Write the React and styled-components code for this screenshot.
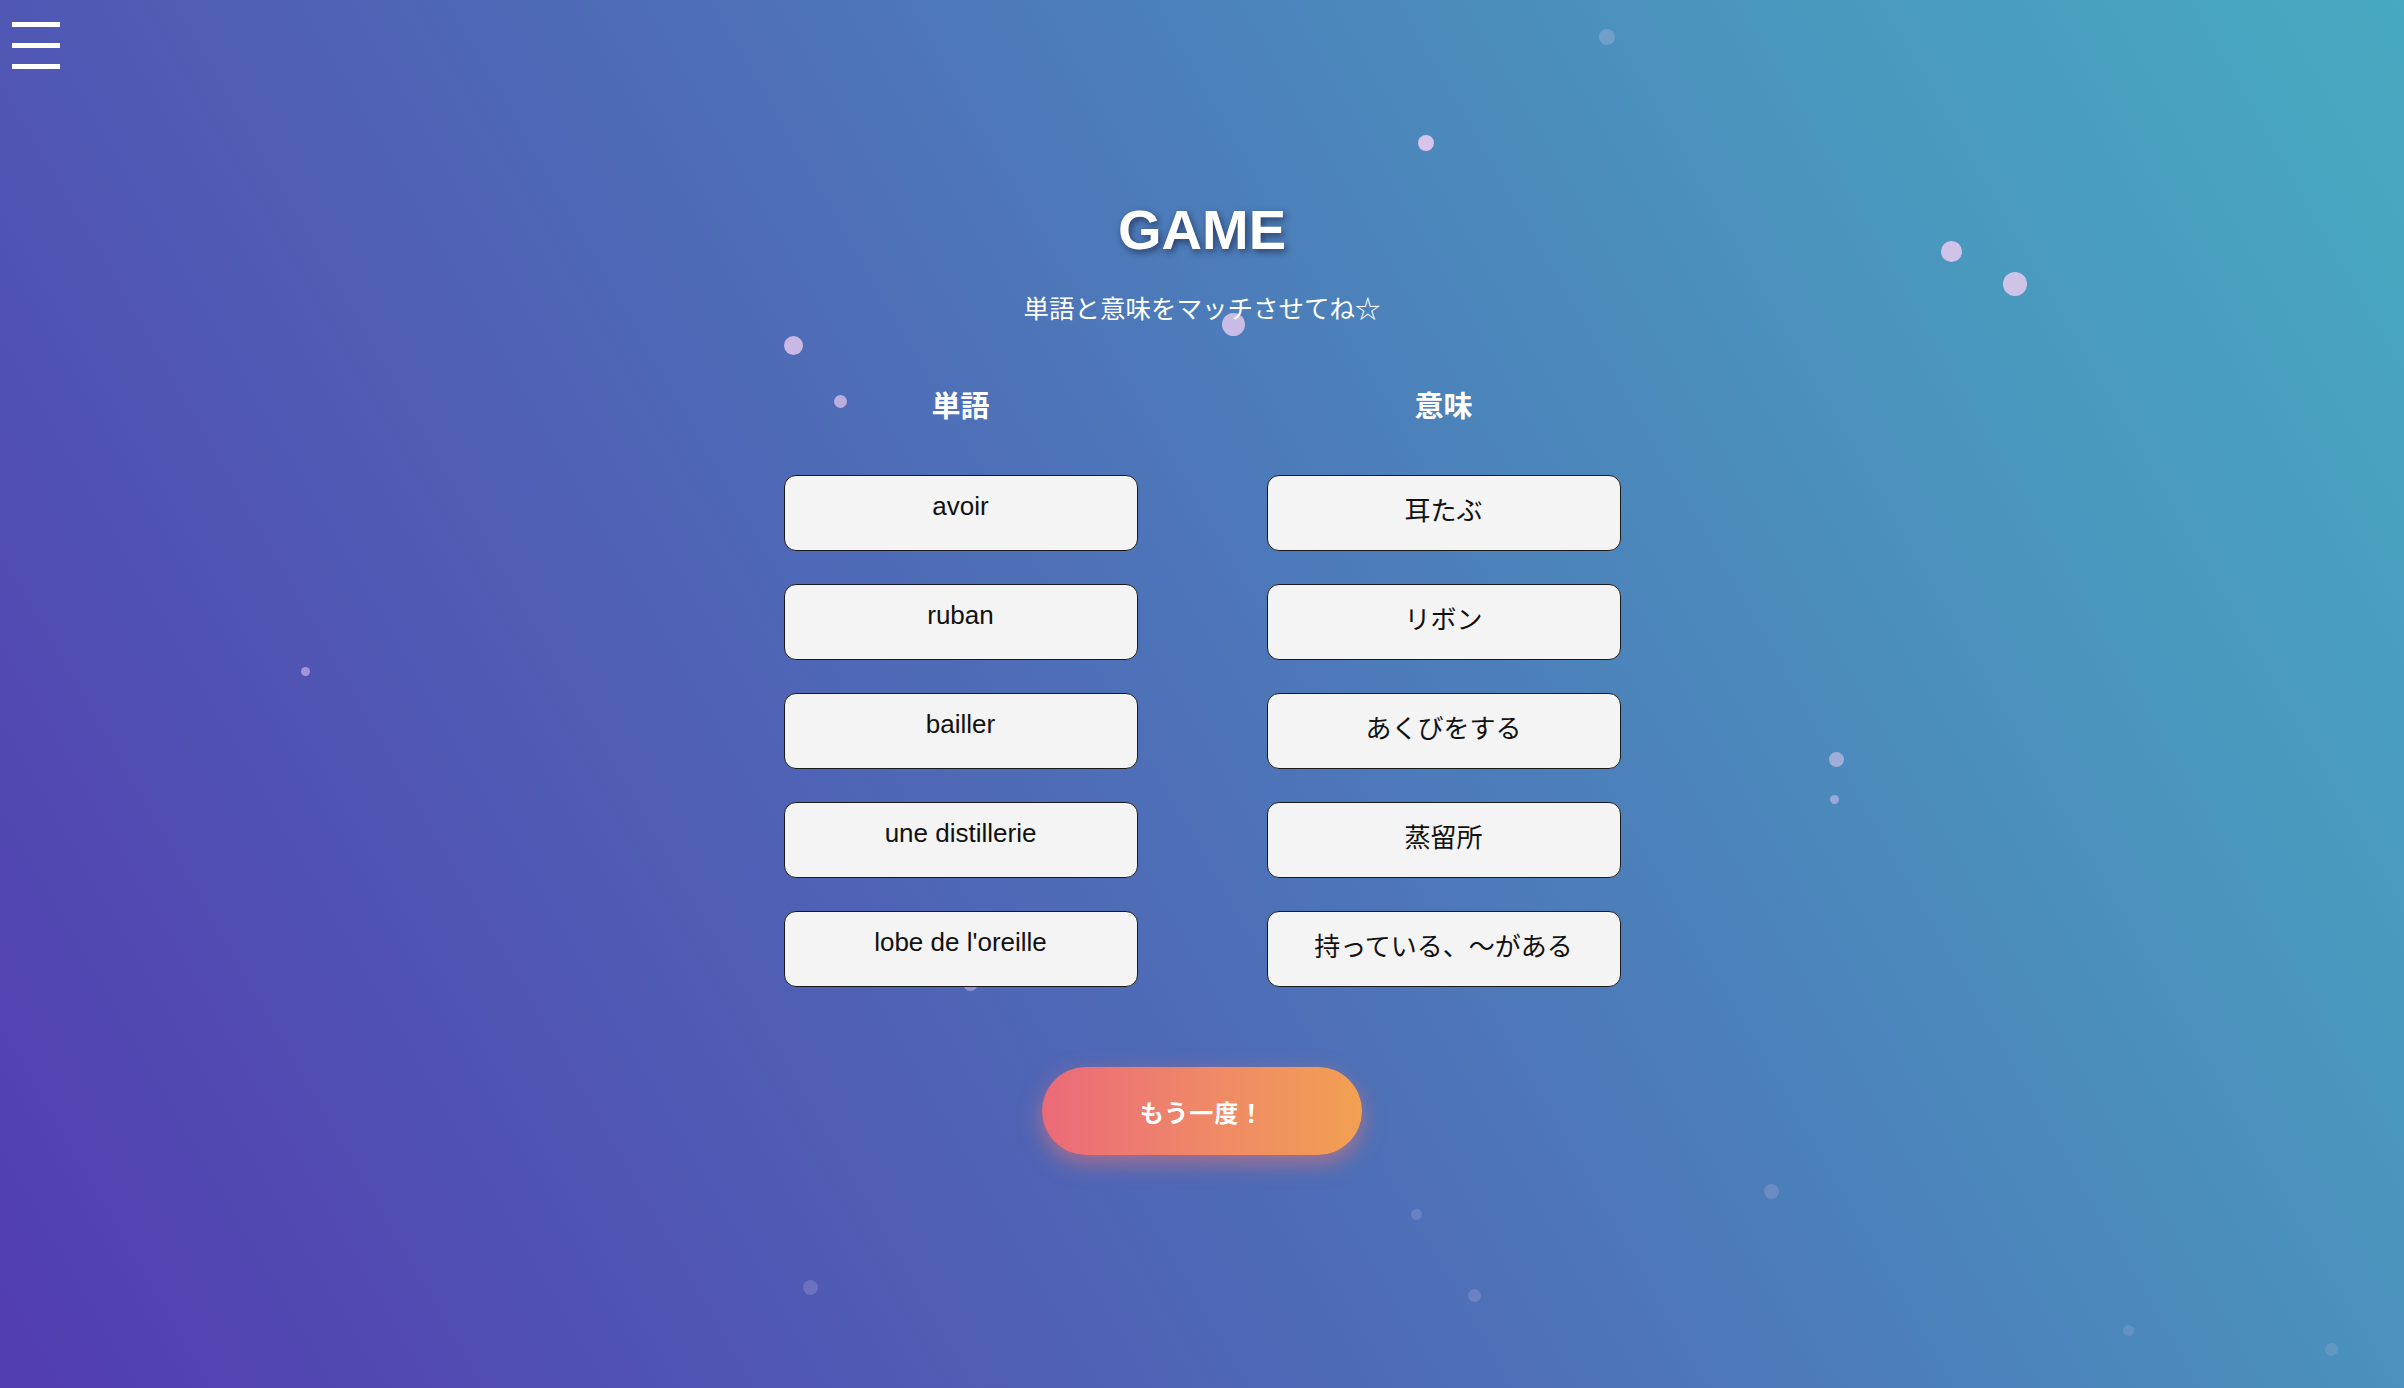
import React from "react";
import styled, { createGlobalStyle } from "styled-components";

const GlobalStyle = createGlobalStyle`
  html, body {
    margin: 0;
    padding: 0;
  }
  body {
    font-family: "Liberation Sans", "Noto Sans CJK JP", sans-serif;
  }
  * { box-sizing: border-box; }
`;

const Page = styled.div`
  position: relative;
  min-height: 1388px;
  overflow: hidden;
  background: linear-gradient(60deg, #523cb0 0%, #4e6db7 45%, #4a95be 78%, #47aac1 100%);
  display: flex;
  flex-direction: column;
  align-items: center;
  padding-top: 198px;
`;

const Particles = styled.div`
  position: absolute;
  inset: 0;
  z-index: 0;
  pointer-events: none;
`;

const Particle = styled.span`
  position: absolute;
  border-radius: 50%;
  background: rgb(232, 202, 240);
`;

const MenuToggle = styled.button`
  position: absolute;
  top: 22px;
  left: 12px;
  z-index: 2;
  display: flex;
  flex-direction: column;
  gap: 16px;
  padding: 0;
  border: none;
  background: none;
  cursor: pointer;
`;

const MenuBar = styled.span`
  display: block;
  width: 48px;
  height: 5px;
  background: #ffffff;
`;

const Content = styled.main`
  position: relative;
  z-index: 1;
  display: flex;
  flex-direction: column;
  align-items: center;
`;

const Title = styled.h1`
  margin: 0;
  font-family: "Liberation Sans", "Noto Sans CJK JP", sans-serif;
  font-size: 56px;
  line-height: 64px;
  font-weight: 700;
  color: #ffffff;
  text-shadow: 2px 3px 7px rgba(20, 20, 50, 0.6);
`;

const Subtitle = styled.p`
  margin: 27px 0 0;
  font-family: "Noto Sans CJK JP", sans-serif;
  font-size: 25.5px;
  line-height: 36px;
  color: #ffffff;
`;

const Board = styled.div`
  margin-top: 59px;
  display: grid;
  grid-template-columns: 354px 354px;
  column-gap: 129px;
`;

const Column = styled.section`
  display: flex;
  flex-direction: column;
  gap: 33px;
`;

const ColumnHeader = styled.h2`
  margin: 0 0 18px;
  text-align: center;
  font-family: "Noto Sans CJK JP", sans-serif;
  font-size: 29px;
  line-height: 40px;
  font-weight: 700;
  color: #ffffff;
`;

const Card = styled.button`
  height: 76px;
  width: 100%;
  display: flex;
  justify-content: center;
  align-items: flex-start;
  padding: ${(p) => p.$top}px 10px 0;
  background: #f4f4f4;
  border: 1.5px solid #1a1a1a;
  border-radius: 12px;
  font-family: "Liberation Sans", "Noto Sans CJK JP", sans-serif;
  font-size: 26px;
  line-height: 30px;
  color: #111111;
  cursor: pointer;
`;

const RetryButton = styled.button`
  margin-top: 80px;
  width: 320px;
  height: 88px;
  border: none;
  border-radius: 44px;
  background: linear-gradient(90deg, #eb6a7a 0%, #ef8a66 55%, #f2a052 100%);
  box-shadow: 0 8px 22px rgba(240, 120, 110, 0.55);
  font-family: "Noto Sans CJK JP", sans-serif;
  font-size: 24px;
  font-weight: 700;
  color: #ffffff;
  letter-spacing: 1px;
  cursor: pointer;
`;

const words = ["avoir", "ruban", "bailler", "une distillerie", "lobe de l'oreille"];
const meanings = ["耳たぶ", "リボン", "あくびをする", "蒸留所", "持っている、～がある"];

const dots = [
  { x: 1607, y: 37, d: 16, o: 0.25 },
  { x: 1426, y: 143, d: 16, o: 0.9 },
  { x: 1951, y: 251, d: 21, o: 0.85 },
  { x: 2015, y: 284, d: 24, o: 0.85 },
  { x: 793, y: 345, d: 19, o: 0.8 },
  { x: 1233, y: 324, d: 23, o: 0.8 },
  { x: 840, y: 401, d: 13, o: 0.7 },
  { x: 305, y: 671, d: 9, o: 0.55 },
  { x: 1836, y: 759, d: 15, o: 0.55 },
  { x: 1834, y: 799, d: 9, o: 0.5 },
  { x: 970, y: 983, d: 15, o: 0.45 },
  { x: 1771, y: 1191, d: 15, o: 0.2 },
  { x: 1416, y: 1214, d: 11, o: 0.2 },
  { x: 810, y: 1287, d: 15, o: 0.2 },
  { x: 1474, y: 1295, d: 13, o: 0.2 },
  { x: 2128, y: 1330, d: 11, o: 0.15 },
  { x: 2331, y: 1349, d: 13, o: 0.15 },
];

export default function App() {
  return (
    <>
      <GlobalStyle />
      <Page>
        <Particles>
          {dots.map((p, i) => (
            <Particle
              key={i}
              style={{
                left: p.x - p.d / 2,
                top: p.y - p.d / 2,
                width: p.d,
                height: p.d,
                opacity: p.o,
              }}
            />
          ))}
        </Particles>
        <MenuToggle aria-label="menu">
          <MenuBar />
          <MenuBar />
          <MenuBar />
        </MenuToggle>
        <Content>
          <Title>GAME</Title>
          <Subtitle>単語と意味をマッチさせてね☆</Subtitle>
          <Board>
            <Column>
              <ColumnHeader>単語</ColumnHeader>
              {words.map((w) => (
                <Card key={w} $top={15}>{w}</Card>
              ))}
            </Column>
            <Column>
              <ColumnHeader>意味</ColumnHeader>
              {meanings.map((m) => (
                <Card key={m} $top={20}>{m}</Card>
              ))}
            </Column>
          </Board>
          <RetryButton>もう一度！</RetryButton>
        </Content>
      </Page>
    </>
  );
}
